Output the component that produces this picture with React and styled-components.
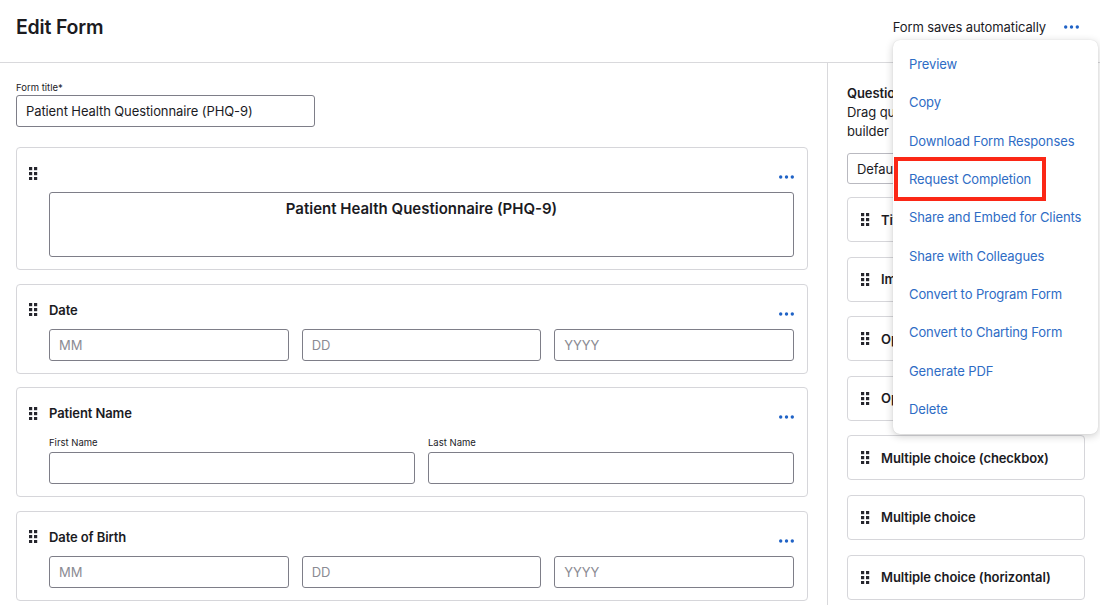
import React from "react";
import styled, { createGlobalStyle } from "styled-components";

const GlobalStyle = createGlobalStyle`
  * { box-sizing: border-box; }
  html, body { margin: 0; padding: 0; height: 100%; overflow: hidden; }
  body {
    font-family: Inter, "Noto Sans", "Liberation Sans", sans-serif;
    color: #1b1b1f;
    background: #fff;
    letter-spacing: -0.1px;
  }
`;

const Page = styled.div`
  position: relative;
  width: 1100px;
  height: 605px;
  display: flex;
  flex-direction: column;
  overflow: hidden;
`;

const Header = styled.header`
  height: 63px;
  flex: none;
  display: flex;
  align-items: center;
  justify-content: space-between;
  padding: 0 21px 0 16px;
  border-bottom: 1px solid #d9d9dc;
`;

const Title = styled.h1`
  margin: 0 0 8px;
  font-size: 19.5px;
  font-weight: 600;
  letter-spacing: -0.2px;
`;

const HeaderRight = styled.div`
  display: flex;
  align-items: center;
  gap: 18px;
  margin-bottom: 8px;
  font-size: 13px;
`;

const Body = styled.div`
  flex: 1;
  display: flex;
  min-height: 0;
`;

const Builder = styled.main`
  width: 828px;
  flex: none;
  border-right: 1px solid #d9d9dc;
  padding: 19px 19px 0 16px;
  display: flex;
  flex-direction: column;
`;

const SmallLabel = styled.label`
  display: block;
  font-size: 9.5px;
  line-height: 12px;
  letter-spacing: 0;
  color: #1b1b1f;
  margin-bottom: ${(p) => (p.$gap === undefined ? 3 : p.$gap)}px;
`;

const TextBox = styled.div`
  height: 32px;
  width: ${(p) => p.$width || "100%"};
  border: 1px solid #7e7e88;
  border-radius: 3px;
  display: flex;
  align-items: center;
  padding: 0 9px;
  font-size: 13px;
  color: ${(p) => (p.$placeholder ? "#8b8b93" : "#1b1b1f")};
`;

const CardList = styled.div`
  margin-top: 20px;
  display: flex;
  flex-direction: column;
  gap: 13.5px;
`;

const Card = styled.section`
  border: 1px solid #d6d6da;
  border-radius: 4px;
  padding: 15px 13px 12px 12px;
`;

const CardHead = styled.div`
  height: 20px;
  display: flex;
  align-items: center;
  gap: 11px;
`;

const CardTitle = styled.div`
  flex: 1;
  font-size: 13px;
  font-weight: 600;
`;

const MoreButton = styled.span`
  display: flex;
  align-items: center;
  margin-top: ${(p) => p.$drop || 0}px;
  cursor: pointer;
`;

const CardBody = styled.div`
  margin: ${(p) => p.$top || 9}px 0 0 20px;
  display: grid;
  grid-template-columns: repeat(${(p) => p.$cols || 1}, 1fr);
  column-gap: 13px;
`;

const HeadingBox = styled.div`
  height: 65px;
  border: 1px solid #7e7e88;
  border-radius: 3px;
  text-align: center;
  padding-top: 6px;
  font-size: 15px;
  font-weight: 600;
  line-height: 20px;
  letter-spacing: 0;
`;

const Palette = styled.aside`
  flex: 1;
  padding: 21px 15px 0 19px;
  display: flex;
  flex-direction: column;
`;

const PaletteTitle = styled.div`
  font-size: 13px;
  font-weight: 600;
  line-height: 19px;
`;

const PaletteHint = styled.p`
  margin: 0;
  font-size: 13px;
  line-height: 19px;
`;

const Select = styled.div`
  margin-top: 12px;
  height: 31px;
  border: 1px solid #b9b9c0;
  border-radius: 3px;
  display: flex;
  align-items: center;
  padding: 0 9px;
  font-size: 13px;
`;

const BlockList = styled.div`
  margin-top: 13px;
  display: flex;
  flex-direction: column;
  gap: 14.6px;
`;

const Block = styled.div`
  height: 45px;
  border: 1px solid #d6d6da;
  border-radius: 4px;
  display: flex;
  align-items: center;
  gap: 11px;
  padding-left: 13px;
  font-size: 13px;
  font-weight: 600;
  white-space: nowrap;
  overflow: hidden;
`;

const Menu = styled.nav`
  position: absolute;
  top: 40px;
  right: 2px;
  width: 205px;
  padding: 5px 0 6px;
  background: #fff;
  border-radius: 7px;
  box-shadow: 0 2px 9px rgba(0, 0, 0, 0.2), 0 0 1px rgba(0, 0, 0, 0.15);
  z-index: 10;
`;

const MenuItem = styled.a`
  position: relative;
  display: flex;
  align-items: center;
  height: 38.3px;
  padding-left: 16px;
  font-size: 13px;
  color: #2e6cc5;
  text-decoration: none;
  cursor: pointer;
`;

const Callout = styled.span`
  position: absolute;
  left: 1px;
  top: -3px;
  width: 152px;
  height: 44px;
  border: 4px solid #fb2716;
  pointer-events: none;
`;

const DragHandle = () => (
  <svg width="9" height="13" viewBox="0 0 9 13" style={{ flex: "none" }}>
    {[0, 5].map((x) =>
      [0, 5, 10].map((y) => (
        <rect key={`${x}-${y}`} x={x} y={y} width="3.2" height="3.2" fill="#26262d" />
      ))
    )}
  </svg>
);

const Dots = () => (
  <svg width="15" height="4" viewBox="0 0 15 4">
    {[1.7, 7.5, 13.3].map((cx) => (
      <circle key={cx} cx={cx} cy="2" r="1.7" fill="#2063c6" />
    ))}
  </svg>
);

const menuItems = [
  "Preview",
  "Copy",
  "Download Form Responses",
  "Request Completion",
  "Share and Embed for Clients",
  "Share with Colleagues",
  "Convert to Program Form",
  "Convert to Charting Form",
  "Generate PDF",
  "Delete",
];

const blocks = [
  "Title",
  "Image",
  "Open text (short)",
  "Open text (long)",
  "Multiple choice (checkbox)",
  "Multiple choice",
  "Multiple choice (horizontal)",
];

function QuestionCard({ title, children, dotsDrop = 8 }) {
  return (
    <Card>
      <CardHead>
        <DragHandle />
        <CardTitle>{title}</CardTitle>
        <MoreButton $drop={dotsDrop}>
          <Dots />
        </MoreButton>
      </CardHead>
      {children}
    </Card>
  );
}

export default function App() {
  return (
    <Page>
      <GlobalStyle />
      <Header>
        <Title>Edit Form</Title>
        <HeaderRight>
          <span>Form saves automatically</span>
          <MoreButton>
            <Dots />
          </MoreButton>
        </HeaderRight>
      </Header>

      <Body>
        <Builder>
          <SmallLabel $gap={1}>Form title*</SmallLabel>
          <TextBox $width="299px">Patient Health Questionnaire (PHQ-9)</TextBox>

          <CardList>
            <QuestionCard title="">
              <CardBody $top={9}>
                <HeadingBox>Patient Health Questionnaire (PHQ-9)</HeadingBox>
              </CardBody>
            </QuestionCard>

            <QuestionCard title="Date">
              <CardBody $cols={3} $top={9}>
                <TextBox $placeholder>MM</TextBox>
                <TextBox $placeholder>DD</TextBox>
                <TextBox $placeholder>YYYY</TextBox>
              </CardBody>
            </QuestionCard>

            <QuestionCard title="Patient Name">
              <CardBody $cols={2} $top={14}>
                <div>
                  <SmallLabel>First Name</SmallLabel>
                  <TextBox />
                </div>
                <div>
                  <SmallLabel>Last Name</SmallLabel>
                  <TextBox />
                </div>
              </CardBody>
            </QuestionCard>

            <QuestionCard title="Date of Birth">
              <CardBody $cols={3} $top={9}>
                <TextBox $placeholder>MM</TextBox>
                <TextBox $placeholder>DD</TextBox>
                <TextBox $placeholder>YYYY</TextBox>
              </CardBody>
            </QuestionCard>
          </CardList>
        </Builder>

        <Palette>
          <PaletteTitle>Questions</PaletteTitle>
          <PaletteHint>Drag question types onto the form builder</PaletteHint>
          <Select>Default questions</Select>
          <BlockList>
            {blocks.map((b) => (
              <Block key={b}>
                <DragHandle />
                {b}
              </Block>
            ))}
          </BlockList>
        </Palette>
      </Body>

      <Menu>
        {menuItems.map((item) => (
          <MenuItem key={item}>
            {item}
            {item === "Request Completion" && <Callout />}
          </MenuItem>
        ))}
      </Menu>
    </Page>
  );
}
